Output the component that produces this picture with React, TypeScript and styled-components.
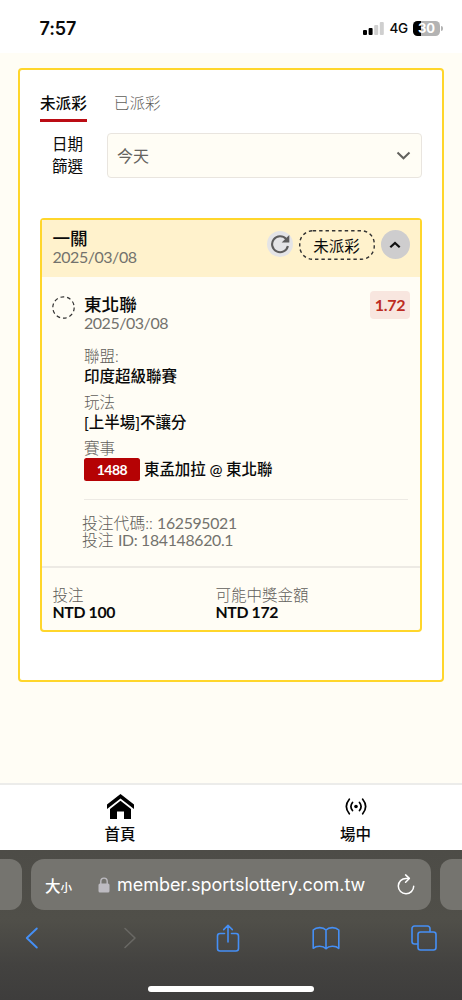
import React from 'react';
import styled, { createGlobalStyle } from 'styled-components';

const gold = '#ffd62b';
const cream = '#fffdf5';
const grey = '#73726d';
const lightTextGrey = '#5f5e5a';

const GlobalStyle = createGlobalStyle`
  * { box-sizing: border-box; }
  body {
    margin: 0;
    background: ${cream};
    font-family: Lato, 'Noto Sans CJK TC', sans-serif;
    color: #0a0a0a;
  }
  svg { display: block; flex: none; }
`;

const Screen = styled.div`
  width: 462px;
  height: 1000px;
  display: flex;
  flex-direction: column;
  overflow: hidden;
`;

const StatusBar = styled.header`
  height: 53px;
  flex: none;
  background: #fff;
  display: flex;
  align-items: center;
  justify-content: space-between;
  padding: 3px 19px 0 39.5px;
  font-family: Inter, sans-serif;
`;

const Clock = styled.span`
  font-size: 18px;
  font-weight: 600;
  letter-spacing: -0.1px;
`;

const StatusIcons = styled.div`
  display: flex;
  align-items: center;
`;

const Network = styled.span`
  font-size: 13.5px;
  font-weight: 500;
  margin: 0 5px 0 5px;
  letter-spacing: -0.2px;
`;

const Battery = styled.span`
  width: 27px;
  height: 15px;
  border-radius: 4.5px;
  background: linear-gradient(90deg, #000 8px, #b3b3b3 8px);
  color: #fff;
  font-size: 13px;
  font-weight: 700;
  line-height: 15px;
  text-align: center;
`;

const BatteryTip = styled.span`
  width: 2px;
  height: 5px;
  margin-left: 1px;
  border-radius: 0 2px 2px 0;
  background: #b3b3b3;
`;

const Main = styled.main`
  flex: 1;
  padding: 14.5px 18px 0;
`;

const Panel = styled.section`
  height: 614px;
  background: #fff;
  border: 2px solid ${gold};
  border-radius: 4px;
  padding: 20px 20px 0;
`;

const Tabs = styled.nav`
  display: flex;
  gap: 27px;
`;

const Tab = styled.div<{ $active?: boolean }>`
  height: 32.5px;
  font-size: 15.6px;
  line-height: 27px;
  font-weight: ${p => (p.$active ? 500 : 300)};
  color: ${p => (p.$active ? '#0a0a0a' : lightTextGrey)};
  border-bottom: 3px solid ${p => (p.$active ? '#bb0c14' : 'transparent')};
`;

const Filter = styled.div`
  display: flex;
  margin-top: 10.5px;
`;

const FilterLabel = styled.div`
  width: 55px;
  margin-right: 12px;
  text-align: center;
  font-size: 15.5px;
  line-height: 22px;
  padding-top: 0.5px;
`;

const Select = styled.div`
  flex: 1;
  height: 45px;
  display: flex;
  align-items: center;
  justify-content: space-between;
  padding: 0 10px 0 9px;
  border: 1px solid #e9e5df;
  border-radius: 4px;
  background: ${cream};
  color: #65645f;
  font-size: 16px;
`;

const Ticket = styled.article`
  height: 414px;
  margin-top: 40.5px;
  border: 2px solid ${gold};
  border-radius: 4px;
  background: ${cream};
  display: flex;
  flex-direction: column;
`;

const TicketHead = styled.div`
  height: 57px;
  flex: none;
  display: flex;
  background: #fff2cc;
  padding: 10px 10.5px 0;
`;

const Titles = styled.div`
  flex: 1;
`;

const Title = styled.div`
  font-size: 17.6px;
  font-weight: 500;
  line-height: 18px;
  height: 19px;
`;

const Caption = styled.div`
  font-size: 16px;
  letter-spacing: -0.47px;
  line-height: 16px;
  height: 18px;
  font-weight: 400;
  color: ${grey};
`;

const Refresh = styled.div`
  width: 26px;
  height: 26px;
  margin-top: 0.5px;
  border-radius: 50%;
  background: #e4e4e6;
  display: flex;
  align-items: center;
  justify-content: center;
`;

const StatusPill = styled.div`
  width: 76px;
  height: 30px;
  margin: 0 6px;
  display: grid;
  place-items: center;
  font-size: 15.5px;
  svg, span { grid-area: 1 / 1; }
`;

const Collapse = styled.div`
  width: 29px;
  height: 29px;
  border-radius: 50%;
  background: #cecdce;
  display: flex;
  align-items: center;
  justify-content: center;
`;

const Pick = styled.div`
  display: flex;
  padding: 14px 10px 0;
`;

const PickTitles = styled.div`
  flex: 1;
  margin-left: 9px;
  padding-top: 4.5px;
`;

const PickMark = styled.div`
  padding-top: 5px;
`;

const Odds = styled.div`
  width: 40px;
  height: 28px;
  border-radius: 4px;
  background: #f8e6df;
  color: #bd2c22;
  font-size: 16px;
  letter-spacing: -0.3px;
  line-height: 28px;
  font-weight: 700;
  text-align: center;
`;

const Details = styled.div`
  margin: 14.5px 12.5px 0 42px;
  padding-bottom: 17.5px;
  border-bottom: 1.5px solid #edeae4;
`;

const Field = styled.div`
  height: 46px;
`;

const FieldName = styled.div`
  height: 19px;
  line-height: 19px;
  font-size: 15.5px;
  font-weight: 300;
  color: ${lightTextGrey};
`;

const FieldValue = styled.div`
  height: 20px;
  line-height: 20px;
  font-size: 15.5px;
  font-weight: 500;
`;

const Match = styled.div`
  height: 23px;
  display: flex;
  align-items: center;
  white-space: nowrap;
  font-size: 15.5px;
  line-height: 21px;
  font-weight: 500;
  letter-spacing: -0.1px;
`;

const Code = styled.span`
  width: 56px;
  height: 23px;
  flex: none;
  margin-right: 4px;
  border-radius: 2.5px;
  background: #b50204;
  color: #fff;
  font-size: 14px;
  font-weight: 700;
  letter-spacing: -0.5px;
  line-height: 23px;
  text-align: center;
`;

const Reference = styled.div`
  padding: 14.5px 0 18px 40px;
  border-bottom: 2px solid #edeae4;
  font-size: 15.8px;
  line-height: 17px;
  color: ${lightTextGrey};
`;

const RefLine = styled.div`
  height: 17px;
  font-weight: 300;
  span { font-weight: 400; letter-spacing: -0.3px; color: ${grey}; }
`;

const Amounts = styled.div`
  display: grid;
  grid-template-columns: 163px 1fr;
  padding: 18px 10.5px 0;
`;

const Amount = styled.div`
  height: 16px;
  line-height: 14px;
  font-size: 15.8px;
  font-weight: 700;
  letter-spacing: -0.35px;
`;

const BottomNav = styled.nav`
  height: 67px;
  flex: none;
  display: grid;
  grid-template-columns: 240px 231px;
  border-top: 2px solid #ececea;
  background: #fff;
`;

const NavItem = styled.div`
  display: flex;
  flex-direction: column;
  align-items: center;
  font-size: 15.5px;
  font-weight: 500;
`;

const NavIcon = styled.div`
  height: 39px;
  display: flex;
  align-items: center;
  padding-top: 4px;
`;

const NavLabel = styled.div`
  line-height: 20px;
`;

const Browser = styled.footer`
  height: 150px;
  flex: none;
  background: linear-gradient(#4d4c47 0, #504f49 70px, #434240 115px, #3e3d3c 100%);
  padding-top: 9px;
`;

const AddressRow = styled.div`
  display: grid;
  grid-template-columns: 22px 400px 22px;
  column-gap: 9px;
  height: 51px;
`;

const SidePage = styled.div<{ $side: 'left' | 'right' }>`
  background: #75746f;
  border-radius: ${p => (p.$side === 'left' ? '0 12px 12px 0' : '12px 0 0 12px')};
`;

const Address = styled.div`
  display: flex;
  align-items: center;
  padding: 0 16px 0 14px;
  border-radius: 13px;
  background: #75746f;
  color: #fff;
  font-family: Inter, sans-serif;
`;

const TextSize = styled.div`
  width: 53px;
  font-family: 'Noto Sans CJK TC', sans-serif;
  font-size: 15.5px;
  font-weight: 500;
  white-space: nowrap;
  small { font-size: 11.5px; }
`;

const Host = styled.span`
  flex: 1;
  margin-left: 7px;
  font-size: 18px;
  letter-spacing: -0.04px;
  white-space: nowrap;
`;

const Tools = styled.div`
  display: grid;
  grid-template-columns: repeat(5, 98px);
  justify-items: center;
  align-items: center;
  height: 56px;
  margin-left: -17px;
`;

const HomeBar = styled.div`
  width: 166px;
  height: 6px;
  margin: 19.5px auto 0;
  border-radius: 3px;
  background: #fff;
`;

const Signal = () => (
  <svg width="21" height="13" viewBox="0 0 21 13">
    <rect x="0" y="8" width="4" height="5" rx="1" fill="#000" />
    <rect x="5.6" y="6" width="4" height="7" rx="1" fill="#000" />
    <rect x="11.2" y="3" width="4" height="10" rx="1" fill="#cfcfcf" />
    <rect x="16.8" y="0" width="4" height="13" rx="1" fill="#cfcfcf" />
  </svg>
);

const tool = { fill: 'none', stroke: '#458ff5', strokeWidth: 1.6, strokeLinecap: 'round', strokeLinejoin: 'round' } as const;

export default function App() {
  return (
    <Screen>
      <GlobalStyle />
      <StatusBar>
        <Clock>7:57</Clock>
        <StatusIcons>
          <Signal />
          <Network>4G</Network>
          <Battery>30</Battery>
          <BatteryTip />
        </StatusIcons>
      </StatusBar>

      <Main>
        <Panel>
          <Tabs>
            <Tab $active>未派彩</Tab>
            <Tab>已派彩</Tab>
          </Tabs>
          <Filter>
            <FilterLabel>日期<br />篩選</FilterLabel>
            <Select>
              今天
              <svg width="15" height="10" viewBox="0 0 15 10" fill="none" stroke="#62615d" strokeWidth="2">
                <path d="M1.5 2.5 7.5 8.3 13.5 2.5" />
              </svg>
            </Select>
          </Filter>

          <Ticket>
            <TicketHead>
              <Titles>
                <Title>一關</Title>
                <Caption>2025/03/08</Caption>
              </Titles>
              <Refresh>
                <svg width="20" height="20" viewBox="0 0 20 20">
                  <path d="M16.2 5A8 8 0 1 0 17.9 12" fill="none" stroke="#5d5c5c" strokeWidth="2.1" />
                  <path d="M19.3 1V8.6H11.7Z" fill="#5d5c5c" />
                </svg>
              </Refresh>
              <StatusPill>
                <svg width="76" height="30" viewBox="0 0 76 30">
                  <rect x="0.75" y="0.75" width="74.5" height="28.5" rx="13" fill="none" stroke="#333" strokeWidth="1.4" strokeDasharray="3.4 3" />
                </svg>
                <span>未派彩</span>
              </StatusPill>
              <Collapse>
                <svg width="12" height="8" viewBox="0 0 12 8" fill="none" stroke="#111" strokeWidth="2.2">
                  <path d="M1.3 6.3 6 1.9 10.7 6.3" />
                </svg>
              </Collapse>
            </TicketHead>

            <Pick>
              <PickMark>
                <svg width="23" height="23" viewBox="0 0 23 23">
                  <circle cx="11.5" cy="11.5" r="10.7" fill="none" stroke="#333" strokeWidth="1.2" strokeDasharray="3.8 2.92" />
                </svg>
              </PickMark>
              <PickTitles>
                <Title>東北聯</Title>
                <Caption>2025/03/08</Caption>
              </PickTitles>
              <Odds>1.72</Odds>
            </Pick>

            <Details>
              <Field>
                <FieldName>聯盟:</FieldName>
                <FieldValue>印度超級聯賽</FieldValue>
              </Field>
              <Field>
                <FieldName>玩法</FieldName>
                <FieldValue>[上半場]不讓分</FieldValue>
              </Field>
              <div>
                <FieldName>賽事</FieldName>
                <Match>
                  <Code>1488</Code>
                  東孟加拉 @ 東北聯
                </Match>
              </div>
            </Details>

            <Reference>
              <RefLine>投注代碼:: <span>162595021</span></RefLine>
              <RefLine>投注 <span>ID: 184148620.1</span></RefLine>
            </Reference>

            <Amounts>
              <div>
                <FieldName>投注</FieldName>
                <Amount>NTD 100</Amount>
              </div>
              <div>
                <FieldName>可能中獎金額</FieldName>
                <Amount>NTD 172</Amount>
              </div>
            </Amounts>
          </Ticket>
        </Panel>
      </Main>

      <BottomNav>
        <NavItem>
          <NavIcon>
            <svg width="27" height="25" viewBox="0 0 27 25">
              <path d="M13.5 0 27 10.5V15L13.5 4.6 0 15V10.5Z" fill="#000" />
              <path d="M13.5 6.8 24 15V25H17V17.5H10V25H3V15Z" fill="#000" />
            </svg>
          </NavIcon>
          <NavLabel>首頁</NavLabel>
        </NavItem>
        <NavItem>
          <NavIcon>
            <svg width="22" height="17" viewBox="0 0 22 17" fill="none" stroke="#000" strokeWidth="1.7" strokeLinecap="round">
              <circle cx="11" cy="8.5" r="1.8" fill="#000" stroke="none" />
              <path d="M7.5 4.5Q4.3 8.5 7.5 12.5M14.5 4.5Q17.7 8.5 14.5 12.5M4.3 1.2Q-1.6 8.5 4.3 15.8M17.7 1.2Q23.6 8.5 17.7 15.8" />
            </svg>
          </NavIcon>
          <NavLabel>場中</NavLabel>
        </NavItem>
      </BottomNav>

      <Browser>
        <AddressRow>
          <SidePage $side="left" />
          <Address>
            <TextSize>大<small>小</small></TextSize>
            <svg width="12" height="16" viewBox="0 0 12 16">
              <rect x="0.5" y="6.5" width="11" height="9" rx="1.5" fill="#bdbbc1" />
              <path d="M2.8 7.5V4.5a3.2 3.4 0 0 1 6.4 0v3" fill="none" stroke="#bdbbc1" strokeWidth="1.4" />
            </svg>
            <Host>member.sportslottery.com.tw</Host>
            <svg width="18" height="21" viewBox="0 0 18 21" fill="none" stroke="#fff" strokeWidth="1.5" strokeLinecap="round" strokeLinejoin="round">
              <path d="M12 4.4H9A7.7 7.7 0 1 0 16.7 12.2" />
              <path d="M8.6 0.9 12.3 4.4 8.6 8.2" />
            </svg>
          </Address>
          <SidePage $side="right" />
        </AddressRow>
        <Tools>
          <svg width="14" height="22" viewBox="0 0 14 22" {...tool} strokeWidth={1.9}><path d="M11.8 1.5 1.8 11 11.8 20.5" /></svg>
          <svg width="14" height="22" viewBox="0 0 14 22" {...tool} stroke="#696864"><path d="M2 1.5 12 11 2 20.5" /></svg>
          <svg width="24" height="28" viewBox="0 0 24 28" {...tool}>
            <path d="M8.5 9.5H4A2.5 2.5 0 0 0 1.5 12V24.5A2.5 2.5 0 0 0 4 27H20A2.5 2.5 0 0 0 22.5 24.5V12A2.5 2.5 0 0 0 20 9.5H15.5M12 18V1.5M7.7 5.6 12 1.3 16.3 5.6" />
          </svg>
          <svg width="28" height="24" viewBox="0 0 28 24" {...tool}>
            <path d="M14 4C11 0.8 4.5 0.8 1.2 4V22.3C4.5 19.5 11 19.5 14 22.8C17 19.5 23.5 19.5 26.8 22.3V4C23.5 0.8 17 0.8 14 4ZM14 4V22.8" />
          </svg>
          <svg width="26" height="26" viewBox="0 0 26 26" {...tool}>
            <rect x="7" y="7" width="18" height="18" rx="2.5" />
            <path d="M6.5 19H3.5A2.5 2.5 0 0 1 1 16.5V3.5A2.5 2.5 0 0 1 3.5 1H16.5A2.5 2.5 0 0 1 19 3.5V6.5" />
          </svg>
        </Tools>
        <HomeBar />
      </Browser>
    </Screen>
  );
}
